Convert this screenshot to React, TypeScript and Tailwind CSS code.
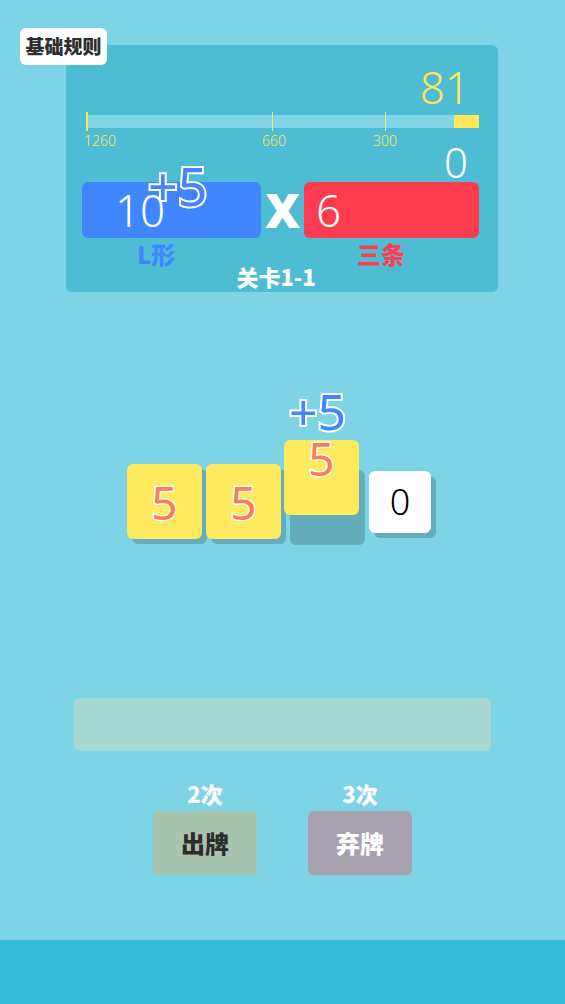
const latin = "font-['Noto_Sans',sans-serif]";
const cjk = "font-['Noto_Sans_CJK_SC','Noto_Sans',sans-serif]";
const outlined = '[paint-order:stroke_fill] [-webkit-text-stroke:4px_#ffffff]';

function Tile({ value, raised = false }: { value: number; raised?: boolean }) {
  if (raised) {
    return (
      <div className="relative h-[75px] w-[75px]">
        <div className="absolute left-[6px] top-[6px] h-[75px] w-[75px] rounded-md bg-[#64adbb]" />
        <div className="absolute left-0 top-[-24px] flex h-[75px] w-[75px] justify-center rounded-md bg-[#ffe95f]">
          <span
            className={`${latin} mt-[-5px] text-[46px] font-normal leading-none text-[#ff7c4d] [paint-order:stroke_fill] [-webkit-text-stroke:3px_#ffffff]`}
          >
            {value}
          </span>
        </div>
        <span
          className={`${latin} absolute left-[5px] top-[-78px] text-[50px] font-normal leading-none text-[#3f86ff] ${outlined}`}
        >
          +5
        </span>
      </div>
    );
  }
  return (
    <div className="flex h-[75px] w-[75px] items-center justify-center rounded-md bg-[#ffe95f] shadow-[5px_5px_0_#64adbb]">
      <span
        className={`${latin} text-[46px] font-normal leading-none text-[#ff7c4d] [paint-order:stroke_fill] [-webkit-text-stroke:3px_#ffffff]`}
      >
        {value}
      </span>
    </div>
  );
}

export default function App() {
  return (
    <div className="relative flex h-[1004px] w-full flex-col overflow-hidden bg-[#7dd4e4]">
      <button
        className={`${cjk} absolute left-[20px] top-[28px] z-10 flex h-[37px] w-[87px] items-center justify-center rounded-md bg-white text-[19px] font-black text-[#2e2e2e]`}
      >
        基础规则
      </button>

      {/* score panel */}
      <div className="ml-[66px] mt-[45px] h-[247px] w-[432px] rounded-md bg-[#4ebdd4]">
        <div
          className={`${latin} mt-[20px] h-[44px] pr-[28px] text-right text-[44px] font-light leading-none text-[#ffe75c]`}
        >
          81
        </div>

        <div className="relative ml-[20px] mt-[6px] h-[13px] w-[393px] bg-[#7fd5e4]">
          <div className="absolute right-0 top-0 h-[13px] w-[25px] bg-[#ffe75c]" />
          <div className="absolute left-0 top-[-3px] h-[19px] w-[2px] bg-[#ffe75c]" />
          <div className="absolute left-[186px] top-[-3px] h-[19px] w-[1px] bg-[#ffe75c]" />
          <div className="absolute left-[299px] top-[-3px] h-[19px] w-[1px] bg-[#ffe75c]" />
        </div>

        <div
          className={`${latin} relative ml-[18px] mt-[6px] h-[14px] w-[393px] text-[14px] font-light leading-none text-[#ffe75c]`}
        >
          <span className="absolute left-0 top-0">1260</span>
          <span className="absolute left-[178px] top-0">660</span>
          <span className="absolute left-[289px] top-0">300</span>
        </div>

        <div
          className={`${latin} mt-[-7px] h-[41px] pr-[30px] text-right text-[42px] font-light leading-none text-white`}
        >
          0
        </div>

        <div className="ml-[16px] flex h-[56px] items-stretch">
          <div className="relative flex w-[179px] items-center rounded-md bg-[#3f86ff] pl-[33px]">
            <span className={`${latin} text-[44px] font-light leading-none text-white`}>10</span>
            <span
              className={`${latin} absolute left-[66px] top-[-22px] text-[52px] font-normal leading-none text-[#3f86ff] ${outlined}`}
            >
              +5
            </span>
          </div>
          <div className="flex w-[43px] items-center justify-center">
            <span className={`${latin} text-[48px] font-black leading-none text-white`}>X</span>
          </div>
          <div className="flex w-[175px] items-center rounded-md bg-[#ff3b4f] pl-[12px]">
            <span className={`${latin} text-[44px] font-light leading-none text-white`}>6</span>
          </div>
        </div>

        <div className={`${cjk} ml-[16px] mt-[4px] flex h-[22px] text-[24px] font-black leading-none`}>
          <div className="w-[179px] pl-[55px] text-[#3f86ff]">L形</div>
          <div className="w-[43px]" />
          <div className="w-[175px] pl-[53px] text-[#ff3b4f]">三条</div>
        </div>

        <div className={`${cjk} mt-[1px] text-center text-[22px] font-black leading-none text-white`}>
          <span className="mr-[12px]">关卡1-1</span>
        </div>
      </div>

      {/* hand */}
      <div className="ml-[127px] mt-[172px] flex items-start">
        <Tile value={5} />
        <div className="w-[4px]" />
        <Tile value={5} />
        <div className="w-[3px]" />
        <Tile value={5} raised />
        <div className="w-[10px]" />
        <div className="mt-[7px] flex h-[62px] w-[62px] items-center justify-center rounded-md bg-white shadow-[5px_5px_0_#64adbb]">
          <span className={`${latin} text-[36px] font-light leading-none text-black`}>0</span>
        </div>
      </div>

      <div className="ml-[74px] mt-[159px] h-[53px] w-[417px] rounded-md bg-[#a7d9d2]" />

      <div className={`${cjk} ml-[153px] mt-[31px] flex gap-[51px]`}>
        <div className="flex w-[104px] flex-col items-center">
          <span className="h-[22px] text-[22px] font-black leading-none text-white">2次</span>
          <button className="mt-[7px] flex h-[64px] w-[104px] items-center justify-center rounded-md bg-[#a7c5ae] text-[24px] font-black text-[#2d2d2d]">
            出牌
          </button>
        </div>
        <div className="flex w-[104px] flex-col items-center">
          <span className="h-[22px] text-[22px] font-black leading-none text-white">3次</span>
          <button className="mt-[7px] flex h-[64px] w-[104px] items-center justify-center rounded-md bg-[#a8a2b0] text-[24px] font-black text-white">
            弃牌
          </button>
        </div>
      </div>

      <div className="mt-auto h-[64px] w-full bg-[#35bbd7]" />
    </div>
  );
}
